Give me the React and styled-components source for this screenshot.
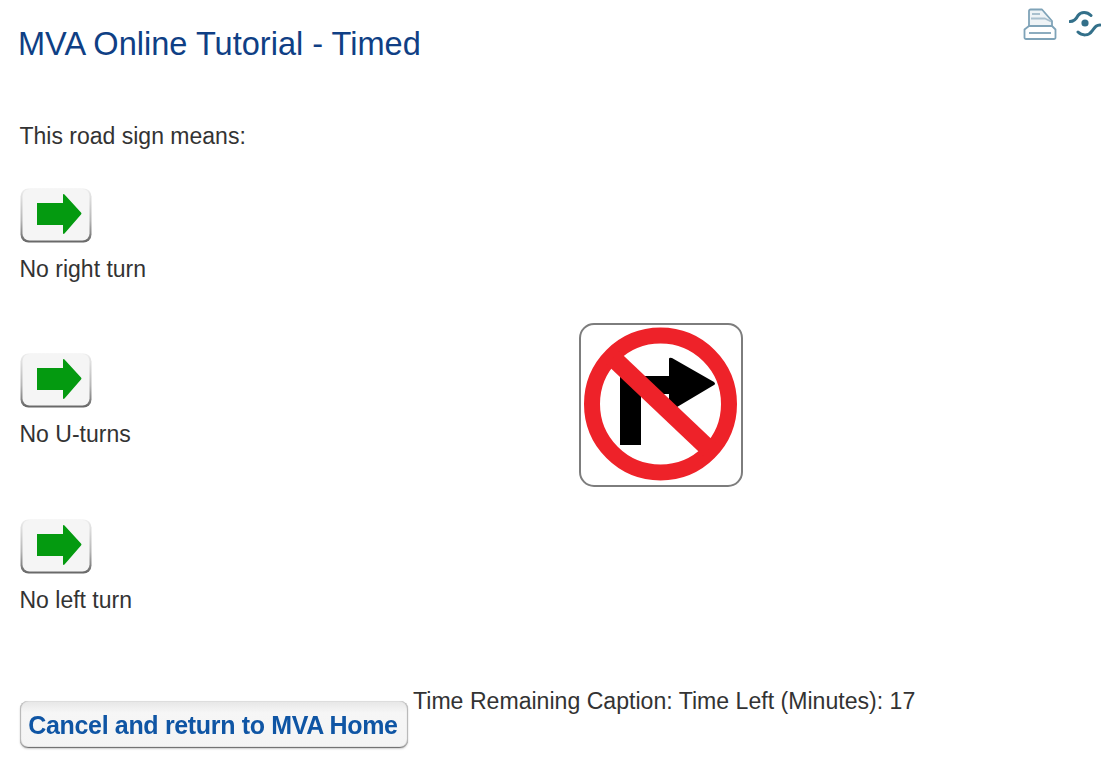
import React from 'react'
import styled, { createGlobalStyle } from 'styled-components'

const GlobalStyle = createGlobalStyle`
  html, body {
    margin: 0;
    background: #fff;
  }
  body {
    font-family: "Liberation Sans", Arial, sans-serif;
    color: #333;
    font-size: 23px;
  }
`

const Page = styled.div`
  width: 1108px;
  height: 778px;
  padding: 0 7px 0 19.5px;
  box-sizing: border-box;
  overflow: hidden;
`

const Header = styled.header`
  display: flex;
  justify-content: space-between;
  align-items: flex-start;
  height: 124px;
`

const Title = styled.h1`
  margin: 26px 0 0 -1.5px;
  font-size: 32.55px;
  line-height: 36px;
  font-weight: normal;
  color: #0f3f85;
`

const Tools = styled.div`
  display: flex;
  gap: 12px;
  padding-top: 8px;

  svg {
    filter: blur(0.4px);
  }
`

const Question = styled.p`
  margin: 0;
  line-height: 24px;
  height: 64px;
`

const Body = styled.div`
  display: grid;
  grid-template-columns: 559.5px 164px;
  height: 514px;
`

const Options = styled.div`
  display: flex;
  flex-direction: column;
`

const Option = styled.div`
  display: flex;
  flex-direction: column;
  align-items: flex-start;
  height: 165.4px;
`

const OptionLabel = styled.span`
  margin-top: 13px;
  line-height: 26px;
`

const ArrowButton = styled.button`
  display: block;
  width: 72px;
  height: 55px;
  margin-left: 0.5px;
  padding: 0;
  border: 0;
  background: none;

  svg {
    display: block;
    filter: blur(0.7px);
  }
`

const Sign = styled.div`
  margin-top: 135px;
  width: 164px;
  height: 164px;

  svg {
    display: block;
    filter: blur(0.4px);
  }
`

const Footer = styled.div`
  display: flex;
  align-items: flex-start;
  gap: 5px;
  padding-left: 0.5px;
`

const CancelButton = styled.button`
  width: 388px;
  height: 47px;
  margin-top: -1px;
  padding: 1px 2px 0 0;
  border: 0;
  border-radius: 8px;
  background: linear-gradient(#e6e6e6, #f6f6f6 25%, #f4f4f4);
  box-shadow: inset 1px 0 1px #b5b5b5, inset -1px 0 1px #b5b5b5, inset 0 -1px 1px #555, 0 1px 2px #ccc;
  color: #0f55a4;
  font-family: "Liberation Sans", Arial, sans-serif;
  font-size: 25px;
  font-weight: bold;
  letter-spacing: -0.34px;
  white-space: nowrap;
  filter: blur(0.4px);
`

const TimeLeft = styled.span`
  margin-top: -14px;
  font-size: 23.1px;
  line-height: 26px;
`

const PrintIcon = () => (
  <svg width="34" height="32" viewBox="0 0 34 32" fill="none" stroke="#7fa3b8" strokeWidth="1.8" strokeLinejoin="round">
    <path d="M6 18V3a1.500 1.500 0 0 1 1.500-1.500H19l10 11.500V18z" fill="#eef3f6" />
    <path d="M8 10.500h14l6 3" stroke="#a9c0ce" />
    <path d="M9 6h8" stroke="#a9c0ce" strokeWidth="2" />
    <path d="M6 18L1.500 21.500v8a1.500 1.500 0 0 0 1.500 1.500h28a1.500 1.500 0 0 0 1.500-1.500v-8L29 18z" fill="#fff" />
    <path d="M6 25h22" />
  </svg>
)

const ToggleIcon = () => (
  <svg width="32" height="30" viewBox="0 0 32 30" fill="none" stroke="#33708a" strokeWidth="3" strokeLinecap="round">
    <path d="M1 13.500c4 0 6-2 8-6 3-4 9-4 13 0" />
    <path d="M31 17c-4 0-5 2-8 6-3 5-10 5-14 1" />
    <circle cx="16" cy="15" r="3.600" fill="#33708a" stroke="none" />
  </svg>
)

const GreenArrow = () => (
  <svg width="72" height="55" viewBox="0 0 72 55">
    <defs>
      <linearGradient id="keyEdge" x1="0" x2="0" y1="0" y2="1">
        <stop offset="0" stopColor="#eee" />
        <stop offset="0.6" stopColor="#b5b5b5" />
        <stop offset="1" stopColor="#666" />
      </linearGradient>
    </defs>
    <rect x="0.5" y="0.5" width="71" height="54" rx="8" fill="url(#keyEdge)" />
    <rect x="2.500" y="1" width="67" height="51.500" rx="7" fill="#f5f5f5" />
    <path d="M17 15H43V7q0-1.500 1.500-.5L61 24.500q1 1 0 2L44.500 45.500q-1.500 1-1.500-.5V37H17z" fill="#049a10" />
  </svg>
)

const NoRightTurnSign = () => (
  <svg width="164" height="164" viewBox="0 0 164 164">
    <rect x="1" y="1" width="162" height="162" rx="14" fill="#fff" stroke="#7d7d7d" strokeWidth="2" />
    <path d="M41 122V53H90V36q0-2 3-1L135 59q2 2 0 3L93 87q-3 1-3-1V71H62V122z" fill="#000" />
    <circle cx="81.500" cy="81" r="68.500" fill="none" stroke="#ee2229" strokeWidth="16" />
    <path d="M34 35L130 126" stroke="#ee2229" strokeWidth="18" />
  </svg>
)

const options = ['No right turn', 'No U-turns', 'No left turn']

const App = () => {
  return (
    <Page>
      <GlobalStyle />
      <Header>
        <Title>MVA Online Tutorial - Timed</Title>
        <Tools>
          <PrintIcon />
          <ToggleIcon />
        </Tools>
      </Header>
      <Question>This road sign means:</Question>
      <Body>
        <Options>
          {options.map((option) => (
            <Option key={option}>
              <ArrowButton type="button"><GreenArrow /></ArrowButton>
              <OptionLabel>{option}</OptionLabel>
            </Option>
          ))}
        </Options>
        <Sign><NoRightTurnSign /></Sign>
      </Body>
      <Footer>
        <CancelButton type="button">Cancel and return to MVA Home</CancelButton>
        <TimeLeft>Time Remaining Caption: Time Left (Minutes): 17</TimeLeft>
      </Footer>
    </Page>
  )
}

export default App
